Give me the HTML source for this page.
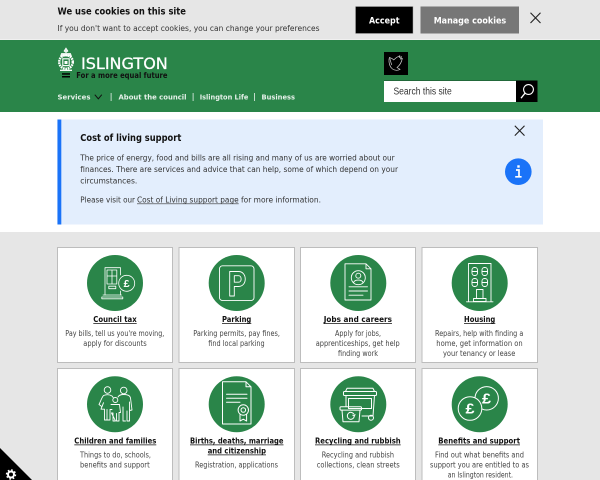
<!DOCTYPE html>
<html lang="en"><head><meta charset="utf-8"><title>Islington</title>
<style>
html,body{margin:0;padding:0;width:600px;height:480px;overflow:hidden;background:#e6e6e6}
svg{display:block}
text{font-family:"DejaVu Sans",sans-serif;font-size:7.6px;fill:#333;white-space:pre}
.t{font-weight:700;fill:#111;font-size:7.8px}
.n{font-weight:700;fill:#e6f1ea;font-size:7.2px}
.d{fill:#444;font-size:7.6px}
.i{fill:none;stroke:#fff;stroke-width:1;stroke-linejoin:round;stroke-linecap:round}
.u{stroke:#111;stroke-width:.8}
.card{fill:#fff;stroke:#bdbdbd;stroke-width:1}
</style></head><body>
<svg width="600" height="480" viewBox="0 0 600 480" xmlns="http://www.w3.org/2000/svg">
<rect width="600" height="480" fill="#e6e6e6"/>
<!-- cookie bar -->
<text x="57.5" y="14.6" style="font-size:9.6px;font-weight:700;fill:#111" textLength="128.5" lengthAdjust="spacingAndGlyphs">We use cookies on this site</text>
<text x="57.5" y="31" style="font-size:7.8px" textLength="262" lengthAdjust="spacingAndGlyphs">If you don't want to accept cookies, you can change your preferences</text>
<rect x="355.5" y="6.5" width="57.5" height="27" fill="#000" stroke="#aaa" stroke-width=".5"/>
<text x="369" y="23.6" style="font-weight:700;fill:#fff;font-size:8.4px" textLength="30.5" lengthAdjust="spacingAndGlyphs">Accept</text>
<rect x="420.5" y="6.5" width="98.5" height="27" fill="#777"/>
<text x="433.7" y="23.6" style="font-weight:700;fill:#fff;font-size:8.4px" textLength="72.5" lengthAdjust="spacingAndGlyphs">Manage cookies</text>
<path d="M530.5 12.8L540.5 23M540.5 12.8L530.5 23" stroke="#222" stroke-width="1.1" fill="none"/>
<!-- header -->
<rect y="39" width="600" height="1" fill="#f0f0f0"/>
<rect y="40" width="600" height="72" fill="#2a8549"/>
<!-- crest -->
<g fill="none" stroke="#fff">
<path d="M66 48l-2 3 2 1.500 2-1.500zM61.500 53.500h9l1 2.500h-11z" fill="#e6f1ea" stroke-width=".7"/>
<circle cx="66" cy="62" r="6.800" stroke-width="2.400" stroke-dasharray="1.700 .7"/>
<rect x="62.800" y="58.800" width="6.400" height="6.800" stroke-width="1.100"/>
<path d="M60 70.300h12" stroke-width="1.300"/>
<path d="M64.500 61h3v3h-3z" fill="#fff" stroke="none"/>
</g>
<text x="81" y="69" style="font-size:16px;fill:#fff;font-weight:400" stroke="#fff" stroke-width=".25" textLength="86.800" lengthAdjust="spacingAndGlyphs">ISLINGTON</text>
<rect x="62" y="73.200" width="8" height="1.500" fill="#000"/><rect x="62" y="76" width="8" height="1.500" fill="#000"/>
<text x="76.300" y="78.200" style="font-size:7.6px;font-weight:700;fill:#111" textLength="91.200" lengthAdjust="spacingAndGlyphs">For a more equal future</text>
<!-- nav -->
<text x="57.500" y="99.700" class="n" textLength="33" lengthAdjust="spacingAndGlyphs">Services</text>
<path d="M94.800 94.700l3.500 4.100 3.500-4.100" fill="none" stroke="#111" stroke-width="1"/>
<rect x="110.700" y="93" width=".8" height="8" fill="#e6f1ea"/>
<text x="118.500" y="99.700" class="n" textLength="68" lengthAdjust="spacingAndGlyphs">About the council</text>
<rect x="192.700" y="93" width=".8" height="8" fill="#e6f1ea"/>
<text x="199.700" y="99.700" class="n" textLength="48.600" lengthAdjust="spacingAndGlyphs">Islington Life</text>
<rect x="254" y="93" width=".8" height="8" fill="#e6f1ea"/>
<text x="261.500" y="99.700" class="n" textLength="33.500" lengthAdjust="spacingAndGlyphs">Business</text>
<!-- bird -->
<rect x="384" y="52" width="24" height="23" fill="#000"/>
<path d="M389 58.500c-.300 4.500.800 8.500 3.500 10.500 2.500 1.700 5.500 1.700 7.500.300l-3-1.800c2.500-2 4.500-5 5.300-9l-1.800.500 1-2.200-2.200.600.400-1.600-3.200 1.700-2.800 2.400-1.700-1.400-2.500-1c.900 2.500 1.200 5 2.300 7.500" fill="none" stroke="#cfcfcf" stroke-width=".7"/>
<!-- search -->
<rect x="384" y="80.500" width="132" height="21.500" fill="#fff"/>
<path d="M384 80.750H516" stroke="#1a4a2c" stroke-width=".6"/>
<rect x="516" y="80.500" width="21.500" height="21.500" fill="#000"/>
<text x="393.500" y="94.500" style="font-family:'Liberation Sans',sans-serif;font-size:10px;fill:#333" textLength="58.300" lengthAdjust="spacingAndGlyphs">Search this site</text>
<circle cx="528.500" cy="89.500" r="4.900" fill="none" stroke="#fff" stroke-width="1.100"/>
<path d="M525 93.200l-4 5" stroke="#fff" stroke-width="1.300" fill="none"/>
<!-- alert -->
<rect y="112" width="600" height="120" fill="#fff"/>
<rect x="57" y="119.500" width="486" height="105" fill="#e3eefd"/>
<rect x="57.500" y="119.500" width="3.800" height="105" fill="#1a73f8"/>
<text x="80.300" y="141.200" style="font-size:9.4px;font-weight:700;fill:#111" textLength="101" lengthAdjust="spacingAndGlyphs">Cost of living support</text>
<text x="80.300" y="160.300" style="font-size:7.8px" textLength="314.400" lengthAdjust="spacingAndGlyphs">The price of energy, food and bills are all rising and many of us are worried about our</text>
<text x="80.300" y="171.800" style="font-size:7.8px" textLength="317.700" lengthAdjust="spacingAndGlyphs">finances. There are services and advice that can help, some of which depend on your</text>
<text x="80.300" y="183.300" style="font-size:7.8px" textLength="57" lengthAdjust="spacingAndGlyphs">circumstances.</text>
<text x="80.300" y="202.300" style="font-size:7.8px" textLength="54.700" lengthAdjust="spacingAndGlyphs">Please visit our</text>
<text x="137" y="202.300" style="font-size:7.8px" textLength="101.700" lengthAdjust="spacingAndGlyphs">Cost of Living support page</text>
<path d="M137 203.800H238.700" stroke="#333" stroke-width=".7"/>
<text x="241" y="202.300" style="font-size:7.8px" textLength="80" lengthAdjust="spacingAndGlyphs">for more information.</text>
<path d="M514.800 125.800L524.500 135.600M524.500 125.800L514.800 135.600" stroke="#222" stroke-width="1.100" fill="none"/>
<circle cx="518.300" cy="171.700" r="13.300" fill="#1a73f8"/>
<path d="M516 170h3v6.500M515.200 176.800h6.400" fill="none" stroke="#fff" stroke-width="1.700"/>
<rect x="517.300" y="165.300" width="2.400" height="2.400" fill="#fff"/>
<!-- cards -->
<rect class="card" x="57.500" y="247.500" width="115" height="115"/>
<rect class="card" x="179" y="247.500" width="115.500" height="115"/>
<rect class="card" x="300.500" y="247.500" width="115" height="115"/>
<rect class="card" x="422" y="247.500" width="115.500" height="115"/>
<rect class="card" x="57.500" y="368.500" width="115" height="115"/>
<rect class="card" x="179" y="368.500" width="115.500" height="115"/>
<rect class="card" x="300.500" y="368.500" width="115" height="115"/>
<rect class="card" x="422" y="368.500" width="115.500" height="115"/>
<g fill="#2a8549">
<circle cx="115" cy="283" r="28"/><circle cx="236.700" cy="283" r="28"/><circle cx="358.300" cy="283" r="28"/><circle cx="479.700" cy="283" r="28"/>
<circle cx="115" cy="404.300" r="28"/><circle cx="236.700" cy="404.300" r="28"/><circle cx="358.300" cy="404.300" r="28"/><circle cx="479.700" cy="404.300" r="28"/>
</g>
<!-- council tax icon -->
<g class="i" style="stroke-width:.8">
<path d="M120.500 275V267.700H105V295M120.500 291V295"/>
<path d="M103 295h18.500M101.800 298.800h21v-1.800h-21z"/>
<path d="M107 270h9.800v14H107zM112 270v14M107 276h9.800"/>
<path d="M108.800 286.200h7v2.500h-7z"/>
<circle cx="126.700" cy="283.300" r="8"/>
</g>
<text x="123.700" y="287" style="font-family:'Liberation Sans',sans-serif;font-size:10.500px;font-weight:700;fill:#fff" textLength="6" lengthAdjust="spacingAndGlyphs">£</text>
<!-- parking icon -->
<g class="i" style="stroke-width:.9">
<rect x="219.500" y="265.800" width="34.500" height="34.800" rx="3"/>
<path d="M229.700 296V271.500H238.500C247.500 271.500 247.500 286.500 238.500 286.500H234.300V296Z"/>
<path d="M234.300 275.700H238.500C242 275.700 242 282.200 238.500 282.200H234.300Z"/>
</g>
<!-- jobs icon -->
<g class="i" style="stroke-width:.9">
<path d="M366 263.800H345V300H371V268.800ZM366 263.800V268.800H371"/>
<circle cx="358.300" cy="277.700" r="7"/>
<circle cx="358.300" cy="275.700" r="2.500"/>
<path d="M353.500 282.700c1-3.500 8.600-3.500 9.600 0"/>
<path d="M349 286.800H367.500M349 291H367.500M349 295.200H363"/>
</g>
<!-- housing icon -->
<g class="i" style="stroke-width:.9">
<path d="M468.500 301.500V263.500H491V301.500"/>
<path d="M466.500 301.800H493"/>
<rect x="472" y="267.500" width="5.500" height="8" rx="2.500"/><rect x="482" y="267.500" width="5.500" height="8" rx="2.500"/>
<rect x="472" y="278.500" width="5.500" height="8" rx="2.500"/><rect x="482" y="278.500" width="5.500" height="8" rx="2.500"/>
<path d="M472 271.500h5.500M482 271.500h5.500M472 282.500h5.500M482 282.500h5.500"/>
<path d="M476.500 298.500V289.500H483V298.500M473.500 298.500H486V301.500H473.500Z"/>
</g>
<!-- family icon -->
<g class="i" style="stroke-width:.9">
<circle cx="107.500" cy="390" r="3.300"/><circle cx="123.700" cy="390.500" r="3.300"/><circle cx="115.300" cy="400" r="2.500"/>
<path d="M103.500 395.500c2.500-1 6-1 8.500.5l1.500 2M103.500 395.500c-2 2.500-3 6-4.500 9l3 2.200 1.500-4-2.500 6.500h3.500V420h2.500v-10.500M107.500 420h2.500v-10.500h2"/>
<path d="M118 397c1-1.800 2.500-2.500 5.500-2.500s6.500.500 7 3.500l1.500 12-2.500.500V421h-2.500v-10M125.500 421h-2.500v-14M129.500 402v8"/>
<path d="M111 404.500h8.500l1 8h-1.500V421h-2.500v-7.500M115.500 421H113v-8h-1.500Z"/>
</g>
<!-- births icon -->
<g class="i" style="stroke-width:1">
<path d="M246 381.800H222.500V424H251V386.800ZM246 381.800V386.800H251"/>
<path d="M226.500 394.300H247M226.500 398.300H247M226.500 402.200H240"/>
<circle cx="243.300" cy="410" r="5.200"/><circle cx="243.300" cy="410" r="2.300"/>
<path d="M240 414.500V421l3.300-1.800 3.300 1.800V414.500"/>
</g>
<!-- recycling icon -->
<g class="i" style="stroke-width:1">
<path d="M345.500 391.500l1.500-3.200h26l1.500 3.200"/>
<rect x="343.500" y="391.500" width="33" height="4" rx="1"/>
<path d="M346 395.500V406.500M374.500 395.500L373 416H362"/>
<rect x="348.500" y="398.500" width="23" height="10"/>
<rect x="340" y="406.800" width="21.500" height="3.300" rx="1"/>
<path d="M342 410.200l1 11.500h16l1-11.500"/>
<path d="M353.800 414a3.500 3.500 0 1 0 .3 3"/>
<path d="M352.800 415.200l1.500 1 .7-1.700"/>
<circle cx="371" cy="417.800" r="2.500"/>
</g>
<!-- benefits icon -->
<g class="i" style="stroke-width:1">
<circle cx="486.700" cy="398.300" r="11.700"/>
<circle cx="470" cy="408.500" r="11.800" fill="#2a8549"/>
</g>
<text x="482" y="403.500" style="font-family:'Liberation Sans',sans-serif;font-size:15px;font-weight:700;fill:#fff" textLength="9" lengthAdjust="spacingAndGlyphs">£</text>
<text x="465.500" y="413.500" style="font-family:'Liberation Sans',sans-serif;font-size:15px;font-weight:700;fill:#fff" textLength="9" lengthAdjust="spacingAndGlyphs">£</text>
<!-- card text row 1 -->
<text class="t" x="93.300" y="322" textLength="43.400" lengthAdjust="spacingAndGlyphs">Council tax</text><path class="u" d="M93.300 323.600H136.700"/>
<text class="d" x="65.300" y="336" textLength="99" lengthAdjust="spacingAndGlyphs">Pay bills, tell us you're moving,</text>
<text class="d" x="83.300" y="346" textLength="63.400" lengthAdjust="spacingAndGlyphs">apply for discounts</text>
<text class="t" x="222" y="322" textLength="29.300" lengthAdjust="spacingAndGlyphs">Parking</text><path class="u" d="M222 323.600H251.300"/>
<text class="d" x="193.300" y="336" textLength="86.700" lengthAdjust="spacingAndGlyphs">Parking permits, pay fines,</text>
<text class="d" x="208.300" y="346" textLength="56.400" lengthAdjust="spacingAndGlyphs">find local parking</text>
<text class="t" x="323.700" y="322" textLength="68.300" lengthAdjust="spacingAndGlyphs">Jobs and careers</text><path class="u" d="M323.700 323.600H392"/>
<text class="d" x="335" y="336" textLength="46" lengthAdjust="spacingAndGlyphs">Apply for jobs,</text>
<text class="d" x="315.700" y="346" textLength="84" lengthAdjust="spacingAndGlyphs">apprenticeships, get help</text>
<text class="d" x="338" y="356" textLength="40" lengthAdjust="spacingAndGlyphs">finding work</text>
<text class="t" x="464" y="322" textLength="31.300" lengthAdjust="spacingAndGlyphs">Housing</text><path class="u" d="M464 323.600H495.300"/>
<text class="d" x="435" y="336" textLength="88.300" lengthAdjust="spacingAndGlyphs">Repairs, help with finding a</text>
<text class="d" x="436.300" y="346" textLength="86.400" lengthAdjust="spacingAndGlyphs">home, get information on</text>
<text class="d" x="443" y="356" textLength="72.300" lengthAdjust="spacingAndGlyphs">your tenancy or lease</text>
<!-- card text row 2 -->
<text class="t" x="74.300" y="443.300" textLength="82" lengthAdjust="spacingAndGlyphs">Children and families</text><path class="u" d="M74.300 444.900H156.300"/>
<text class="d" x="80" y="457.700" textLength="71" lengthAdjust="spacingAndGlyphs">Things to do, schools,</text>
<text class="d" x="80" y="467.700" textLength="69.700" lengthAdjust="spacingAndGlyphs">benefits and support</text>
<text class="t" x="190" y="443.300" textLength="93.500" lengthAdjust="spacingAndGlyphs">Births, deaths, marriage</text><path class="u" d="M190 444.900H283.500"/>
<text class="t" x="207.700" y="453.300" textLength="58.300" lengthAdjust="spacingAndGlyphs">and citizenship</text><path class="u" d="M207.700 454.900H266"/>
<text class="d" x="195" y="467.700" textLength="83" lengthAdjust="spacingAndGlyphs">Registration, applications</text>
<text class="t" x="315" y="443.300" textLength="85.700" lengthAdjust="spacingAndGlyphs">Recycling and rubbish</text><path class="u" d="M315 444.900H400.700"/>
<text class="d" x="321.700" y="457.700" textLength="72.300" lengthAdjust="spacingAndGlyphs">Recycling and rubbish</text>
<text class="d" x="316.700" y="467.700" textLength="83" lengthAdjust="spacingAndGlyphs">collections, clean streets</text>
<text class="t" x="438.300" y="443.300" textLength="81.700" lengthAdjust="spacingAndGlyphs">Benefits and support</text><path class="u" d="M438.300 444.900H520"/>
<text class="d" x="435" y="457.700" textLength="89" lengthAdjust="spacingAndGlyphs">Find out what benefits and</text>
<text class="d" x="430" y="467.700" textLength="99" lengthAdjust="spacingAndGlyphs">support you are entitled to as</text>
<text class="d" x="447.700" y="477.700" textLength="65.300" lengthAdjust="spacingAndGlyphs">an Islington resident.</text>
<!-- cookie corner -->
<path d="M0 448L32 480H0Z" fill="#000"/>
<circle cx="11" cy="474.500" r="3" fill="none" stroke="#fff" stroke-width="2"/>
<circle cx="11" cy="474.500" r="4.500" fill="none" stroke="#fff" stroke-width="1.400" stroke-dasharray="1.700 1.830"/>
</svg>
</body></html>
